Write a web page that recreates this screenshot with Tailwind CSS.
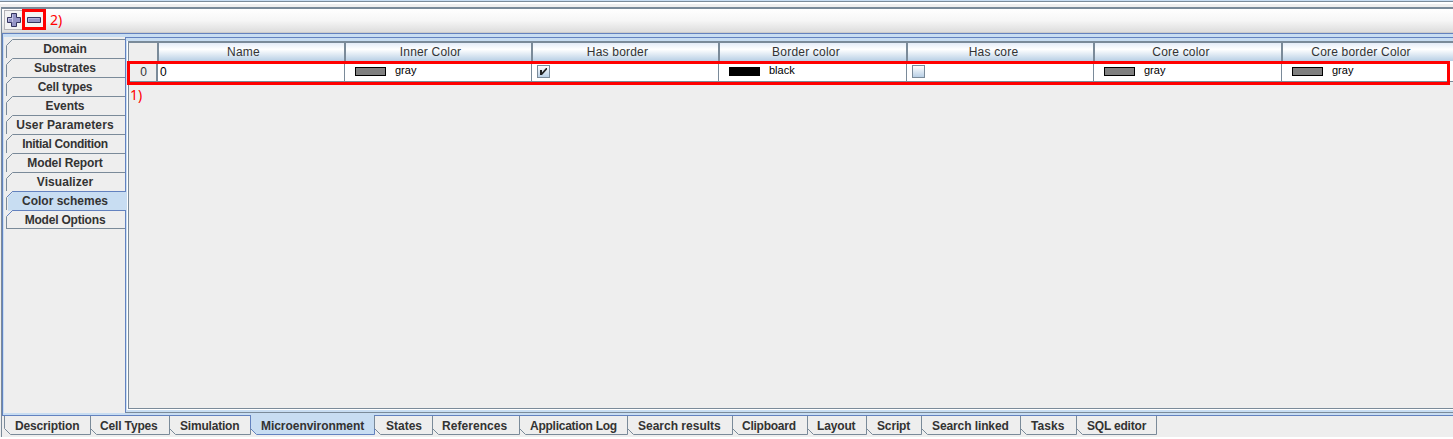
<!DOCTYPE html>
<html lang="en">
<head>
<meta charset="utf-8">
<title>Color schemes</title>
<script src="https://cdn.jsdelivr.net/npm/@tailwindcss/browser@4"></script>
</head>
<body class="w-[1453px] h-[439px] overflow-hidden bg-white font-['Liberation_Sans',Arial,sans-serif] text-[12px] text-[#333333] relative flex flex-col">
  <div class="h-[7px] shrink-0 flex flex-col bg-[#eeeeee]">
    <div class="h-px bg-[#c8ddf2]"></div><div class="h-px bg-[#7a8a99]"></div><div class="h-[2px] bg-white"></div>
  </div>
  <div class="h-[430px] shrink-0 bg-[#eeeeee] pl-px flex">
  <div class="grow border-l border-[#7a8a99] flex flex-col">
    <header class="h-[26px] shrink-0 border-t-2 border-t-[#7a8a99] border-b border-b-[#cccccc] bg-linear-to-b from-white via-[#f6f6f6] to-[#dddddd] flex items-start pl-[2px] pt-px">
      <button class="w-[20px] h-[20px] border border-[#b4b4b8] bg-[#f3f3f3] flex items-center justify-center">
        <svg width="14" height="14" viewBox="0 0 14 14"><path d="M4.5 .5h5v4h4v5h-4v4h-5v-4h-4v-5h4z" fill="#9494c6" stroke="#34345f"/><path d="M5.5 9V1.500M1.500 8.500V5.500h4" fill="none" stroke="#c4c4e4"/></svg>
      </button>
      <button class="w-[20px] h-[20px] border border-[#b4b4b8] bg-[#f3f3f3] flex items-center justify-center">
        <svg width="14" height="6" viewBox="0 0 14 6"><path d="M.5 .5h13v5H.5z" fill="#9494c6" stroke="#34345f"/><path d="M1.500 4.500v-3h11" fill="none" stroke="#b4b4dc"/></svg>
      </button>
      <span class="ml-[6px] mt-[1px] text-[14px] leading-[18px] text-[#f00] font-['Noto_Sans',sans-serif]">2)</span>
    </header>
    <main class="h-[383px] shrink-0 border-t border-b border-l border-[#6382bf] bg-[#c8ddf2] flex">
      <nav class="w-[121px] shrink-0 mt-[3px] mb-[2px] ml-px bg-[#eeeeee] pl-[2px] pt-[2px]" id="side"></nav>
      <section class="grow mt-[3px] mb-[2px] border-t border-l border-[#6382bf] border-b border-b-[#7a8a99] flex">
        <div class="grow ml-px mt-[3px] mb-[2px] border-l border-b border-white flex">
          <div class="grow border-l border-[#7a8a99] border-b bg-[#eeeeee]">
            <div class="h-[20px] flex border-t-2 border-[#7a8a99]" id="head"></div>
            <div class="h-[21px] flex border-b border-[#7a8a99] text-black" id="row"></div>
            <div class="ml-[1px] mt-[4px] text-[14px] leading-[18px] text-[#f00] font-['Noto_Sans',sans-serif]">1)</div>
          </div>
        </div>
      </section>
    </main>
    <footer class="h-[19px] shrink-0 flex pl-[2px]" id="bottom"></footer>
  </div>
  </div>
  <div class="absolute left-[127px] top-[61px] w-[1323px] h-[24px] border-3 border-[#f00]"></div>
  <div class="absolute left-[22px] top-[9px] w-[24px] h-[21px] border-3 border-[#f00]"></div>
<script>
// label, letter spacing in px
const side = [["Domain",-0.1],["Substrates",0],["Cell types",-0.2],["Events",-0.1],["User Parameters",0.15],["Initial Condition",-0.3],["Model Report",-0.1],["Visualizer",0.05],["Color schemes",0],["Model Options",-0.2]];
document.getElementById("side").innerHTML = side.map(([t, s], i) => `
  <div class="relative h-[19px] w-[119px] font-bold text-center leading-[20px]">
    <svg class="absolute left-0 top-0 overflow-visible" width="121" height="20" viewBox="0 0 121 20">
      ${i === 8 ? '<path d="M2 20V6L7 1h114v18H8z" fill="#c8ddf2"/>' : ''}
      <path d="M.5 19V6.500L6.500 .5H119" fill="none" stroke="#7a8a99"/>
      ${i === 8 || i === 9 ? '<path d="M1 6L6.500 .5H119" fill="none" stroke="#6382bf"/>' : ''}
      ${i === 9 ? '<path d="M0 18.500H119" stroke="#7a8a99"/>' : ''}
    </svg>
    <span class="relative block w-[118px]" style="letter-spacing:${s}px">${t}</span>
  </div>`).join("");

const cols = [["Name",187],["Inner Color",187],["Has border",187],["Border color",188],["Has core",187],["Core color",188],["Core border Color",172]];
document.getElementById("head").innerHTML = '<div class="w-[28px] shrink-0 bg-[#eeeeee]"></div>' + cols.map(([t, w], i) => `
  <div class="shrink-0 border-l-2 border-[#7a8a99] bg-linear-to-b from-[#e4ecf8] via-white via-35% to-[#b8cfe5] text-center leading-[19px] tracking-[0.2px] whitespace-nowrap" style="width:${w}px"><span class="relative ${i > 2 ? '-left-[7px]' : '-left-[8px]'}">${t}</span></div>`).join("");

const sw = (c, t) => `<span class="ml-[10px] mt-[6px] w-[31px] h-[9px] border border-black" style="background:${c}"></span><span class="ml-[9px] mt-[2px] text-[11px] leading-[15px]">${t}</span>`;
const box = on => `<span class="ml-[5px] mt-[4px] w-[13px] h-[13px] border border-[#7a8a99] bg-linear-to-b from-white to-[#b8cfe5]">${on ? '<svg width="11" height="11" viewBox="0 0 11 11"><path d="M2 4h2v2.500L8 2h1v1.500L4 9H2z" fill="#222"/></svg>' : ''}</span>`;
const cells = ['<span class="ml-[2px] leading-[23px]">0</span>', sw("#808080","gray"), box(true), sw("#000","black"), box(false), sw("#808080","gray"), sw("#808080","gray")];
document.getElementById("row").innerHTML = '<div class="w-[28px] shrink-0 border-r border-[#7a8a99] bg-[#eeeeee] text-center leading-[23px] text-[#333] pl-[2px]">0</div>' + cells.map((c, i) => `
  <div class="shrink-0 border-l border-[#7a8a99] bg-white flex items-start" style="width:${cols[i][1]}px">${c}</div>`).join("");

// label, tab width, letter spacing in px, text inset in px
const tabs = [["Description",86,-0.15,11],["Cell Types",79,-0.15,10],["Simulation",81,-0.2,11],["Microenvironment",124,-0.05,11],["States",58,0,12],["References",87,0.05,10],["Application Log",108,-0.25,11],["Search results",105,0,11],["Clipboard",75,-0.25,10],["Layout",59,-0.15,10],["Script",55,-0.15,11],["Search linked",99,-0.1,11],["Tasks",56,0.1,11],["SQL editor",80,-0.2,11]];
document.getElementById("bottom").innerHTML = tabs.map(([t, w, s, x], i) => `
  <div class="relative shrink-0 h-[19px] font-bold leading-[21px] whitespace-nowrap" style="width:${w}px;padding-left:${x}px">
    <svg class="absolute left-0 top-0 overflow-visible" width="${w + 1}" height="19">
      ${i === 3 ? '<path d="M1 -1H124V18H6L1 13z" fill="#c8ddf2"/>' : ''}
      <path d="M.5 0V12.500L6.500 18.500H${w + .5}V0" fill="none" stroke="${i === 3 ? '#6382bf' : '#7a8a99'}"/>
    </svg>
    <span class="relative" style="letter-spacing:${s}px">${t}</span>
  </div>`).join("");
</script>
</body>
</html>
